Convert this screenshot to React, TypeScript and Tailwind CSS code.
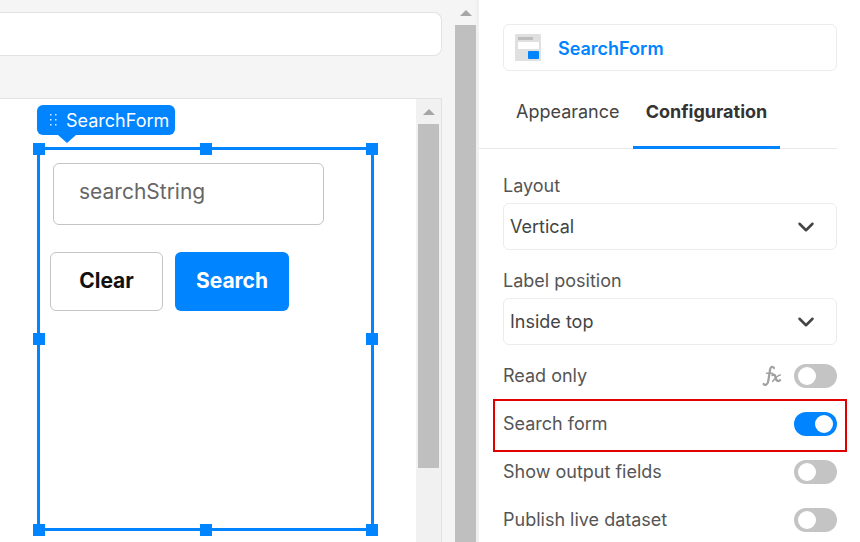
import { ChevronDown } from "lucide-react"

const font = { fontFamily: "Inter, sans-serif" }

function Handle({ className }: { className: string }) {
  return <div className={`absolute w-3 h-3 bg-[#0084ff] ${className}`} />
}

function Toggle({ on = false }: { on?: boolean }) {
  return (
    <div className={`w-[43px] h-6 rounded-full flex items-center px-1 ${on ? "bg-[#0084ff] justify-end" : "bg-[#c4c4c4] justify-start"}`}>
      <div className="w-[18px] h-[18px] rounded-full bg-white" />
    </div>
  )
}

function Select({ label, value }: { label: string; value: string }) {
  return (
    <div className="flex flex-col">
      <div className="h-[34px] pb-[2px] flex items-center text-[18px] text-[#555555]">{label}</div>
      <div className="h-[47px] border border-[#ececec] rounded-md flex items-center justify-between pl-[6px] pr-[17px] text-[18px] text-[#444444]">
        <span>{value}</span>
        <ChevronDown size={26} strokeWidth={2.3} className="text-[#444444]" />
      </div>
    </div>
  )
}

function ScrollArrow() {
  return <div className="w-0 h-0 border-x-[6px] border-x-transparent border-b-[6px] border-b-[#a6a6a6]" />
}

export default function App() {
  return (
    <div className="flex w-[860px] h-[542px] overflow-hidden bg-white" style={font}>

      {/* canvas side */}
      <div className="w-[455px] shrink-0 bg-[#f5f5f5] flex flex-col pt-3 pr-[13px]">
        <div className="h-[44px] bg-white border border-l-0 border-[#e2e2e2] rounded-r-lg" />

        <div className="mt-[42px] flex-1 flex bg-white border-t border-r border-[#e2e2e2]">
          <div className="flex-1 pl-[37px] pt-[48px] relative">
            <div className="relative w-[337px] h-[384px] border-[3px] border-[#0084ff]">
              <Handle className="-left-[7px] -top-[7px]" />
              <Handle className="left-[160px] -top-[7px]" />
              <Handle className="-right-[7px] -top-[7px]" />
              <Handle className="-left-[7px] top-[183px]" />
              <Handle className="-right-[7px] top-[183px]" />
              <Handle className="-left-[7px] -bottom-[8px]" />
              <Handle className="left-[160px] -bottom-[8px]" />
              <Handle className="-right-[7px] -bottom-[8px]" />

              <div className="absolute -left-[3px] -top-[45px] h-[30px] w-[138px] bg-[#0084ff] rounded-md flex items-center pl-[13px] text-white text-[18px]">
                <svg width="8" height="12" viewBox="0 0 8 12" className="mr-[8px]" fill="#ffffff" opacity="0.85">
                  <rect x="0" y="0" width="1.5" height="1.5" />
                  <rect x="5" y="0" width="1.5" height="1.5" />
                  <rect x="0" y="5" width="1.5" height="1.5" />
                  <rect x="5" y="5" width="1.5" height="1.5" />
                  <rect x="0" y="10" width="1.5" height="1.5" />
                  <rect x="5" y="10" width="1.5" height="1.5" />
                </svg>
                SearchForm
                <div className="absolute left-[21px] -bottom-[8px] w-0 h-0 border-x-[9px] border-x-transparent border-t-[8px] border-t-[#0084ff]" />
              </div>

              <div className="ml-[13px] mt-[13px] w-[271px] h-[62px] border border-[#c4c4c4] rounded-md flex items-center pl-[25px] pb-[4px] text-[21px] text-[#666666]">
                searchString
              </div>

              <div className="flex gap-3 ml-[10px] mt-[27px]">
                <button className="w-[113px] h-[59px] pb-[2px] bg-white border border-[#c4c4c4] rounded-md text-[21px] font-bold text-[#111111]">
                  Clear
                </button>
                <button className="w-[114px] h-[59px] pb-[2px] bg-[#0084ff] rounded-md text-[21px] font-bold text-white">
                  Search
                </button>
              </div>
            </div>
          </div>

          {/* inner scrollbar */}
          <div className="w-[25px] shrink-0 bg-[#f1f1f1] flex flex-col items-center">
            <div className="h-[25px] w-full flex items-center justify-center"><ScrollArrow /></div>
            <div className="w-[21px] h-[344px] bg-[#bfbfbf]" />
          </div>
        </div>
      </div>

      {/* outer scrollbar */}
      <div className="w-[21px] shrink-0 bg-[#bfbfbf] relative">
        <div className="h-[25px] bg-[#f5f5f5] flex items-center justify-center"><ScrollArrow /></div>
      </div>

      {/* settings panel */}
      <div className="flex-1 bg-white border-l-[3px] border-[#f0f0f0] pt-6 pr-[23px]">
        <div className="ml-6 h-[47px] border border-[#ececec] rounded-md flex items-center pl-[11px]">
          <svg width="26" height="27" viewBox="0 0 26 27">
            <rect width="26" height="27" rx="1" fill="#e0e0e0" />
            <rect x="3" y="3" width="15" height="3" fill="#bdbdbd" />
            <rect x="3" y="8" width="21" height="7" fill="#ffffff" />
            <rect x="13" y="17" width="11" height="8" rx="1" fill="#0084ff" />
          </svg>
          <span className="ml-[17px] pt-[1px] text-[18px] font-semibold text-[#0084ff]">SearchForm</span>
        </div>

        <div className="h-[78px] flex border-b border-[#e8e8e8]">
          <div className="ml-6 w-[130px] flex items-center pl-[13px] pt-[4px] text-[18px] text-[#444444]">Appearance</div>
          <div className="w-[147px] flex items-center justify-center pt-[6px] text-[18px] font-bold text-[#333333] border-b-[3px] border-[#0084ff] -mb-px">Configuration</div>
        </div>

        <div className="ml-6 mt-[20px] flex flex-col">
          <Select label="Layout" value="Vertical" />
          <div className="h-[14px]" />
          <Select label="Label position" value="Inside top" />

          <div className="mt-[7px] h-[48px] flex items-center justify-between text-[18px] text-[#555555]">
            <span className="pb-[2px]">Read only</span>
            <div className="flex items-center gap-[12px]">
              <svg width="20" height="22" viewBox="0 0 20 22" fill="none" stroke="#a0a0a0" strokeLinecap="round">
                <path d="M12 3C11 1.2 8.8 1.2 8.2 4C7.4 8 7 13 6 17C5.4 19.8 3 20.6 1.6 19" strokeWidth="2.2" />
                <path d="M4.5 8.2H10.5" strokeWidth="1.5" />
                <path d="M10.5 10C12.6 9.2 13.2 10.5 13.6 12.5C14 15 14.8 17 18 15.2" strokeWidth="2.4" />
                <path d="M18.4 10C16 9.6 13 13.4 10.6 16.4" strokeWidth="1.5" />
              </svg>
              <Toggle />
            </div>
          </div>

          <div className="relative h-[48px] flex items-center justify-between text-[18px] text-[#555555]">
            <span className="pb-[2px]">Search form</span>
            <Toggle on />
            <div className="absolute -left-[10px] -right-[10px] top-[-1px] bottom-[-4px] border-2 border-[#e00000]" />
          </div>

          <div className="h-[48px] flex items-center justify-between text-[18px] text-[#555555]">
            <span className="pb-[2px]">Show output fields</span>
            <Toggle />
          </div>

          <div className="h-[48px] flex items-center justify-between text-[18px] text-[#555555]">
            <span className="pb-[2px]">Publish live dataset</span>
            <Toggle />
          </div>
        </div>
      </div>
    </div>
  )
}
